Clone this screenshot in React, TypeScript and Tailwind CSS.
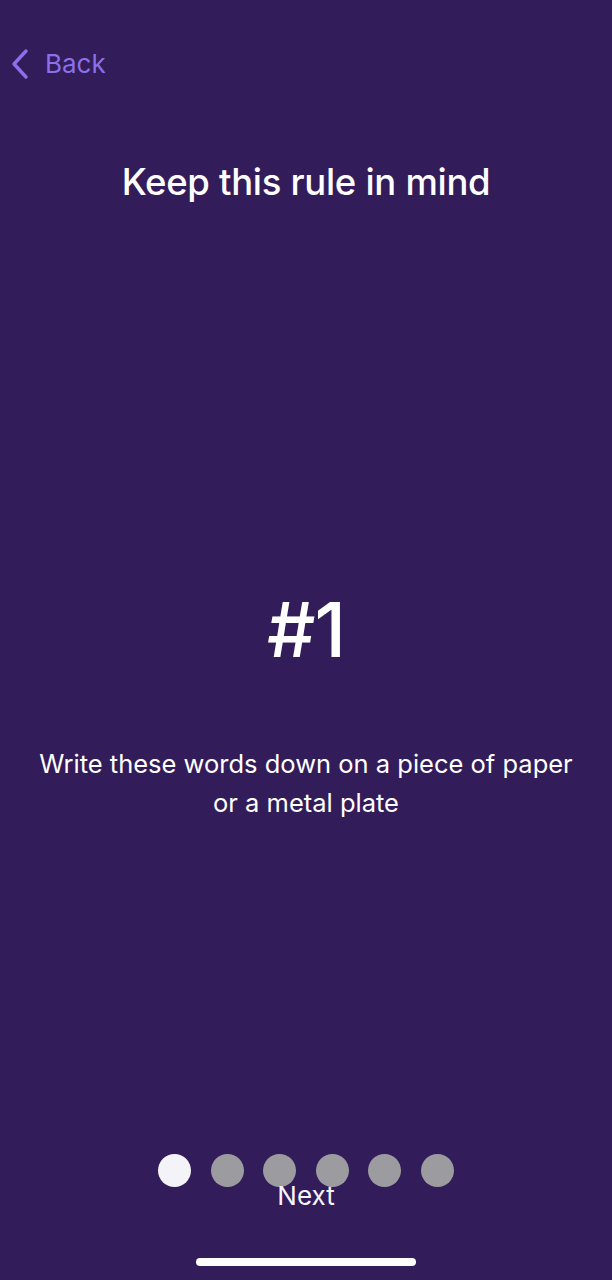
const steps = [0, 1, 2, 3, 4, 5];

export default function App() {
  const active = 0;

  return (
    <main
      className="flex h-[1280px] w-[612px] flex-col bg-[#321c5a] text-white"
      style={{ fontFamily: 'Inter, "Noto Sans", sans-serif' }}
    >
      <div className="h-[47px]" />

      <button className="flex items-center gap-[15px] self-start pl-[10px] text-[#8b70ea]">
        <svg width="20" height="34" viewBox="0 0 20 34" fill="none">
          <path d="M16 4 L4 17 L16 30" stroke="currentColor" strokeWidth="3.4" strokeLinecap="round" strokeLinejoin="round" />
        </svg>
        <span className="text-[26px] leading-[34px]">Back</span>
      </button>

      <h1 className="mt-[81px] text-center text-[36.5px] font-medium leading-[40px] tracking-[-0.3px]">
        Keep this rule in mind
      </h1>

      <div className="flex flex-1 flex-col items-center">
        <div className="mt-[387px] text-[76px] font-medium leading-[80px] tracking-[-1px]">#1</div>
        <p className="mt-[75px] px-[20px] text-center text-[25.5px] leading-[39px]">
          Write these words down on a piece of paper
          <br />
          or a metal plate
        </p>
      </div>

      <div className="flex flex-col items-center">
        <div className="flex gap-[19.5px]">
          {steps.map((s) => (
            <div
              key={s}
              className={`h-[33px] w-[33px] rounded-full ${s === active ? 'bg-[#f4f3f8]' : 'bg-[#9c9ca0]'}`}
            />
          ))}
        </div>
        <button className="-mt-[7px] text-[26px] leading-[32px] text-[#f7f4fb]">Next</button>
      </div>

      <div className="mt-[46px] mb-[14px] flex justify-center">
        <div className="h-[8px] w-[220px] rounded-full bg-white" />
      </div>
    </main>
  );
}
